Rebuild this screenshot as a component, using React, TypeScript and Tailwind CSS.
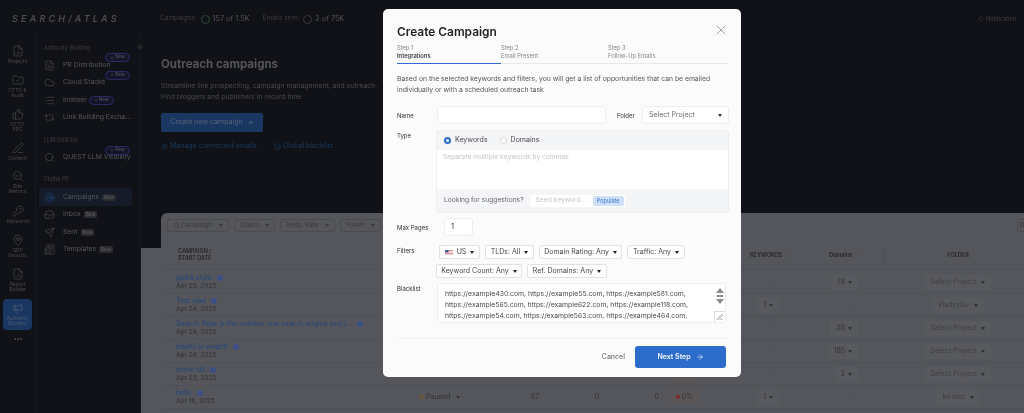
import { ArrowRight, Ban, Bell, ChevronLeft, ChevronsUpDown, Cloud, Ellipsis, FileChartColumn, FileText, Inbox, KeyRound, List, MapPin, Megaphone, PenLine, Plus, Repeat2, Search, SearchCheck, Send, Settings, ThumbsUp, FolderCheck, Newspaper, Target, X } from "lucide-react";

const font = { fontFamily: '"Inter", "Liberation Sans", sans-serif' };

const railItems = [
    { icon: FileChartColumn, label: "Projects", h: "h-[29px]" },
    { icon: FolderCheck, label: "OTTO & Audit", h: "h-[34px]" },
    { icon: ThumbsUp, label: "OTTO PPC", h: "h-[34px]" },
    { icon: PenLine, label: "Content", h: "h-[28px]" },
    { icon: SearchCheck, label: "Site Metrics", h: "h-[35px]" },
    { icon: KeyRound, label: "Keywords", h: "h-[29px]" },
    { icon: MapPin, label: "GBP Galactic", h: "h-[34px]" },
    { icon: FileChartColumn, label: "Report Builder", h: "h-[31px]" },
];

function NewBadge({ inline }: { inline?: boolean }) {
    return (
        <span
            className={`flex h-[9px] w-[25px] items-center justify-center gap-[1px] rounded-full border border-[#2c2a63] bg-[#15152a] text-[4.5px] text-[#5a5a68] ${
                inline ? "ml-[2px]" : "absolute right-[2px] top-[-3px]"
            }`}
        >
            <Plus size={4} />
            New
        </span>
    );
}

function BetaBadge() {
    return <span className="ml-[3px] rounded-[2px] bg-[#2b2c31] px-[2px] text-[4.5px] leading-[7px] text-[#64646a]">Beta</span>;
}

function NavRow({ icon: Icon, label, badge, active }: { icon: typeof FileText; label: string; badge?: "new" | "inline" | "beta"; active?: boolean }) {
    return (
        <div className={`relative flex h-[17.5px] items-center pl-[5px] ${active ? "rounded-[2px] bg-[#151b28]" : ""}`}>
            <Icon size={11} strokeWidth={1.2} className={active ? "text-[#1f4a86]" : "text-[#55565a]"} />
            <span className="ml-[8px] whitespace-nowrap text-[6.8px] text-[#55565a]">{label}</span>
            {badge === "new" && <NewBadge />}
            {badge === "inline" && <NewBadge inline />}
            {badge === "beta" && <BetaBadge />}
        </div>
    );
}

function GroupTitle({ children, className = "" }: { children: string; className?: string }) {
    return <div className={`pl-[5px] text-[5.5px] text-[#38393e] ${className}`}>{children}</div>;
}

function FilterButton({ label, search, width }: { label: string; search?: boolean; width: string }) {
    return (
        <div className={`flex h-[13px] shrink-0 items-center justify-between rounded-[3px] border border-[#4a4b4f] px-[5px] text-[6.5px] text-[#3a3b3f] ${width}`}>
            <span className="flex items-center gap-[1px]">
                {search && <Search size={7} />}
                {label}
            </span>
            <Caret />
        </div>
    );
}

function Caret({ className = "" }: { className?: string }) {
    return <span className={`inline-block h-0 w-0 border-x-[2.5px] border-t-[3px] border-x-transparent border-t-current ${className}`} />;
}

const rows = [
    { name: "ghibli style", date: "Apr 25, 2025", keywords: "-", domains: "74", folder: "Select Project" },
    { name: "Test vlad", date: "Apr 24, 2025", keywords: "1", domains: "-", folder: "Vladyslav" },
    { name: "Search Atlas is the number one search engine tool i...", date: "Apr 24, 2025", keywords: "-", domains: "26", folder: "Select Project" },
    { name: "health is wealth", date: "Apr 24, 2025", keywords: "-", domains: "185", folder: "Select Project" },
    { name: "show nill", date: "Apr 23, 2025", keywords: "-", domains: "2", folder: "Select Project" },
    { name: "hello", date: "Apr 18, 2025", keywords: "1", domains: "-", folder: "ke test" },
];

function ValueChip({ value, dashGap }: { value: string; dashGap: string }) {
    if (value === "-") return <span className={`text-[#45464a] ${dashGap}`}>-</span>;
    return (
        <span className="flex h-[15px] items-center gap-[3px] rounded-[2px] bg-[#58595e] px-[6px] text-[#333438]">
            {value}
            <Caret />
        </span>
    );
}

function TableRow({ row, last }: { row: (typeof rows)[number]; last: boolean }) {
    return (
        <div className="flex h-[23px] items-center border-b border-[#505156] text-[7px]">
            <div className="w-[240px] shrink-0 pl-[15px] leading-[8.5px]">
                <div className="flex items-center gap-[5px] whitespace-nowrap text-[#23467d]">
                    {row.name}
                    <span className="h-[6px] w-[6px] rounded-full bg-[#3d4f85]" />
                </div>
                <div className="text-[6.5px] text-[#313236]">{row.date}</div>
            </div>
            <div className="flex w-[104px] shrink-0 items-center pl-[19px] text-[7px] text-[#333438]">
                {last && (
                    <span className="flex items-center gap-[3px]">
                        <span className="h-[4px] w-[3px] border-x border-[#7a5d20]" />
                        Paused
                        <Caret className="ml-[2px]" />
                    </span>
                )}
            </div>
            <div className="flex w-[60px] shrink-0 justify-center text-[#333438]">{last ? "87" : ""}</div>
            <div className="flex w-[64px] shrink-0 justify-center text-[#333438]">{last ? "0" : ""}</div>
            <div className="flex w-[41px] shrink-0 justify-end pr-[11px] text-[#333438]">{last ? "0" : ""}</div>
            <div className="flex h-[15px] w-[29px] shrink-0 items-center justify-center gap-[2px] rounded-[2px] bg-[#5a5657] text-[#333438]">
                {last && (
                    <>
                        <span className="h-[4px] w-[4px] rounded-full bg-[#7c2b2b]" />
                        0%
                    </>
                )}
            </div>
            <div className="flex w-[80px] shrink-0 justify-end">
                <ValueChip value={row.keywords} dashGap="mr-[2px]" />
            </div>
            <div className="flex w-[79px] shrink-0 justify-end">
                <ValueChip value={row.domains} dashGap="mr-[6px]" />
            </div>
            <div className="ml-[33px] flex w-[134px] shrink-0 justify-center text-[#3f4044]">
                <span className="flex h-[15px] items-center gap-[5px] rounded-[2px] bg-[#58595e] px-[6px]">
                    {row.folder}
                    <Caret className="text-[#303135]" />
                </span>
            </div>
        </div>
    );
}

function Pill({ children, width }: { children: React.ReactNode; width: string }) {
    return (
        <span className={`flex h-[14px] items-center justify-center gap-[4px] rounded-[2px] border border-[#e2e2e2] bg-white text-[7px] text-[#45464a] ${width}`}>
            {children}
            <Caret className="text-[#222]" />
        </span>
    );
}

function Label({ children, className = "" }: { children: string; className?: string }) {
    return <div className={`w-[40px] shrink-0 text-[6px] text-[#2f3033] ${className}`}>{children}</div>;
}

function UsFlag() {
    return (
        <svg width="8" height="5" viewBox="0 0 16 10" className="shrink-0">
            <rect width="16" height="10" fill="#d98a92" />
            <rect y="2" width="16" height="1.5" fill="#fff" />
            <rect y="5" width="16" height="1.5" fill="#fff" />
            <rect y="8" width="16" height="1" fill="#fff" />
            <rect width="7" height="5" fill="#4a5a94" />
        </svg>
    );
}

function Modal() {
    return (
        <div className="absolute left-[383px] top-[9px] h-[368px] w-[358px] rounded-[5px] bg-[#fbfbfb] px-[14px] blur-[0.2px]">
            <X size={16} strokeWidth={1.2} className="absolute right-[12px] top-[13px] text-[#8b8c90]" />
            <div className="pt-[13px] text-[11.9px] font-semibold leading-[20px] text-[#1f2023]">Create Campaign</div>
            <div className="mt-[2px] flex h-[20px] border-b border-[#e8e8e8] text-[5.8px] leading-[7.5px] text-[#85868a]">
                <div className="h-[20px] w-[104px] border-b-[1.5px] border-[#2d6ad1]">
                    Step 1
                    <div className="font-semibold text-[#3c3d41]">Integrations</div>
                </div>
                <div className="w-[107px]">
                    Step 2<div>Email Present</div>
                </div>
                <div>
                    Step 3<div>Follow-Up Emails</div>
                </div>
            </div>
            <p className="mt-[10px] w-[330px] text-[6.8px] leading-[10.5px] text-[#55565a]">
                Based on the selected keywords and filters, you will get a list of opportunities that can be emailed individually or with a scheduled outreach task
            </p>

            <div className="mt-[11px] flex h-[18px] items-center">
                <Label>Name</Label>
                <div className="h-[18px] w-[169px] shrink-0 rounded-[3px] border border-[#eeeeee] bg-white" />
                <span className="ml-[11px] w-[25px] shrink-0 text-[6px] text-[#2f3033]">Folder</span>
                <div className="flex h-[18px] w-[87px] shrink-0 items-center justify-between rounded-[3px] border border-[#eeeeee] bg-white px-[6px] text-[7px] text-[#6a6b6f]">
                    Select Project
                    <Caret className="text-[#333]" />
                </div>
            </div>

            <div className="mt-[6px] flex">
                <Label className="pt-[1px]">Type</Label>
                <div className="ml-[-1px] h-[83px] w-[293px] shrink-0 overflow-hidden rounded-[3px] border border-[#eeeeee] bg-[#f4f5f6]">
                    <div className="flex h-[19px] items-center pl-[7px] text-[7px] text-[#4a4b4f]">
                        <span className="h-[7px] w-[7px] rounded-full border-[2px] border-[#2d6ad1] bg-white" />
                        <span className="ml-[4px]">Keywords</span>
                        <span className="ml-[12px] h-[7px] w-[7px] rounded-full border border-[#d5d5d5] bg-white" />
                        <span className="ml-[4px]">Domains</span>
                    </div>
                    <div className="h-[39px] bg-white pl-[6px] pt-[2px] text-[6.7px] text-[#c4c5c8]">Separate multiple keywords by commas</div>
                    <div className="flex h-[23px] items-center pl-[7px] text-[6.7px] text-[#6a6b6f]">
                        Looking for suggestions?
                        <div className="ml-[6px] flex h-[12px] w-[95px] items-center justify-between rounded-[2px] bg-white pl-[6px] pr-[1px] text-[#c4c5c8]">
                            Seed keyword...
                            <span className="rounded-[2px] bg-[#cfe0f8] px-[4px] text-[5.5px] leading-[10px] text-[#3c78d0]">Populate</span>
                        </div>
                    </div>
                </div>
            </div>

            <div className="mt-[5px] flex h-[18px] items-center">
                <Label>Max Pages</Label>
                <div className="ml-[7px] flex h-[18px] w-[29px] items-center rounded-[3px] border border-[#eeeeee] bg-white pl-[6px] text-[7.5px] text-[#333]">1</div>
            </div>

            <div className="mt-[9px] flex">
                <Label className="pt-[1px]">Filters</Label>
                <div className="flex w-[250px] flex-wrap gap-x-[5px] gap-y-[5px]">
                    <Pill width="w-[41px] ml-[2px]">
                        <UsFlag />
                        US
                    </Pill>
                    <Pill width="w-[49px]">TLDs: All</Pill>
                    <Pill width="w-[83px]">Domain Rating: Any</Pill>
                    <Pill width="w-[58px]">Traffic: Any</Pill>
                    <Pill width="w-[86px] ml-[-1px]">Keyword Count: Any</Pill>
                    <Pill width="w-[80px]">Ref. Domains: Any</Pill>
                </div>
            </div>

            <div className="mt-[5px] flex">
                <Label className="pt-[1px]">Blacklist</Label>
                <div className="relative h-[40px] w-[289px] shrink-0 overflow-hidden rounded-[3px] border border-[#eeeeee] bg-white pl-[7px] pt-[4px] text-[6.85px] leading-[11px] text-[#4a4b4f]">
                    <div className="whitespace-nowrap">https://example430.com, https://example55.com, https://example581.com,</div>
                    <div className="whitespace-nowrap">https://example565.com, https://example622.com, https://example118.com,</div>
                    <div className="whitespace-nowrap">https://example54.com, https://example563.com, https://example464.com,</div>
                    <div className="whitespace-nowrap">https://example244.com, https://example311.com, https://example48.com,</div>
                    <div className="absolute right-0 top-0 flex h-full w-[11px] flex-col items-center bg-white pt-[4px] text-[#8a8b8e]">
                        <span className="h-0 w-0 border-x-[4px] border-b-[5px] border-x-transparent border-b-current" />
                        <span className="mt-[2px] h-[2px] w-[6px] bg-current" />
                        <span className="mt-[2px] h-0 w-0 border-x-[4px] border-t-[5px] border-x-transparent border-t-current" />
                    </div>
                    <span className="absolute bottom-0 right-0 flex h-[11px] w-[11px] items-center justify-center border-l border-t border-[#dddddd] bg-white text-[#666]">
                        <PenLine size={6} />
                    </span>
                </div>
            </div>

            <div className="mt-[15px] flex h-[39px] items-start justify-end border-t border-[#f0f0f0] pr-[1px] pt-[7px]">
                <span className="mr-[10px] flex h-[22px] items-center text-[7px] font-medium text-[#77787c]">Cancel</span>
                <span className="flex h-[22px] w-[91px] items-center justify-center gap-[5px] rounded-[3px] bg-[#2d6ccb] text-[7px] font-semibold text-[#f2f6fc]">
                    Next Step
                    <ArrowRight size={8} />
                </span>
            </div>
        </div>
    );
}

export default function App() {
    return (
        <div style={font} className="relative h-[413px] w-[1024px] overflow-hidden bg-[#111217]">
            <div className="flex h-full flex-col blur-[0.6px]">
                <div className="flex h-[33px] shrink-0 items-center pt-[5px]">
                    <div className="w-[141px] whitespace-nowrap pl-[12px] text-[9px] font-semibold italic tracking-[3.2px] text-[#4b4c50]">SEARCH/ATLAS</div>
                    <div className="flex items-center pl-[19px] text-[6.5px]">
                        <span className="text-[#3a3b3f]">Campaigns:</span>
                        <span className="ml-[4px] h-[9px] w-[9px] rounded-full border border-[#2d4a34]" />
                        <span className="ml-[3px] text-[7.3px] text-[#515256]">157 of 1.5K</span>
                        <span className="ml-[13px] text-[#3a3b3f]">Emails sent:</span>
                        <span className="ml-[4px] h-[9px] w-[9px] rounded-full border border-[#35363a]" />
                        <span className="ml-[3px] text-[7.3px] text-[#515256]">2 of 75K</span>
                    </div>
                    <div className="ml-auto flex items-center gap-[2px] pr-[8px] text-[5.5px] text-[#3c3d42]">
                        <Bell size={6} />
                        Notification
                    </div>
                </div>

                <div className="flex min-h-0 flex-1">
                    <aside className="flex w-[36px] shrink-0 flex-col items-center border-r border-[#191a20] pt-[12px]">
                        {railItems.map((item) => (
                            <div key={item.label} className={`flex w-full shrink-0 flex-col items-center text-center text-[5px] leading-[5.2px] text-[#45464b] ${item.h}`}>
                                <item.icon size={12} strokeWidth={1.1} className="mb-[1.5px] text-[#55565a]" />
                                <span className="w-[22px]">{item.label}</span>
                            </div>
                        ))}
                        <div className="flex h-[31px] w-[29px] shrink-0 flex-col items-center justify-center rounded-[4px] bg-[#1a3761] text-center text-[5px] leading-[5.2px] text-[#46566f]">
                            <Megaphone size={11} strokeWidth={1.2} className="mb-[2px] text-[#56657c]" />
                            <span className="w-[24px]">Authority Building</span>
                        </div>
                        <Ellipsis size={10} className="mt-[4px] shrink-0 text-[#55565a]" />
                    </aside>

                    <nav className="relative w-[105px] shrink-0 border-r border-[#17181d] pl-[3px] pr-[8px] pt-[11px]">
                        <ChevronLeft size={6} className="absolute right-[-3px] top-[11px] rounded-full bg-[#1a1b20] text-[#55565a]" />
                        <GroupTitle className="mb-[4px]">Authority Building</GroupTitle>
                        <NavRow icon={FileText} label="PR Distribution" badge="new" />
                        <NavRow icon={Cloud} label="Cloud Stacks" badge="new" />
                        <NavRow icon={List} label="Indexer" badge="inline" />
                        <NavRow icon={Repeat2} label="Link Building Excha..." />
                        <GroupTitle className="mb-[4px] mt-[10px]">LLM Visibility</GroupTitle>
                        <NavRow icon={Search} label="QUEST LLM Visibility" badge="new" />
                        <GroupTitle className="mb-[5px] mt-[9px]">Digital PR</GroupTitle>
                        <NavRow icon={Target} label="Campaigns" badge="beta" active />
                        <NavRow icon={Inbox} label="Inbox" badge="beta" />
                        <NavRow icon={Send} label="Sent" badge="beta" />
                        <NavRow icon={Newspaper} label="Templates" badge="beta" />
                    </nav>

                    <main className="min-w-0 flex-1">
                        <div className="h-[180px] pl-[20px] pt-[23px]">
                            <h1 className="text-[11.5px] font-bold leading-[16px] text-[#55565a]">Outreach campaigns</h1>
                            <p className="mt-[9px] text-[6.85px] leading-[10.5px] text-[#47484c]">
                                Streamline link prospecting, campaign management, and outreach.
                                <br />
                                Find bloggers and publishers in record time.
                            </p>
                            <div className="mt-[11px] flex h-[19px] w-[102px] items-center justify-center gap-[4px] rounded-[2px] bg-[#1a3761] text-[7px] text-[#566578]">
                                Create new campaign
                                <ArrowRight size={7} />
                            </div>
                            <div className="mt-[9px] flex items-center text-[7px] text-[#173a5e]">
                                <Settings size={7} />
                                <span className="ml-[2px]">Manage connected emails</span>
                                <Ban size={7} className="ml-[17px]" />
                                <span className="ml-[2px]">Global blacklist</span>
                            </div>
                        </div>

                        <div className="relative flex h-[200px] bg-[#111217] pt-[35px]">
                            <div className="absolute inset-x-0 bottom-0 top-[35px] bg-[#55565b]" />
                            <div className="absolute bottom-0 left-[20px] right-0 top-0 overflow-hidden rounded-tl-[6px] bg-[#55565b] px-[6px] pt-[6px]">
                                <div className="flex gap-[5px]">
                                    <FilterButton label="Campaign" search width="w-[62px]" />
                                    <FilterButton label="Status" width="w-[41px]" />
                                    <FilterButton label="Resp. Rate" width="w-[55px]" />
                                    <FilterButton label="Folder" width="w-[41px]" />
                                    <span className="ml-[631px] flex h-[13px] w-[12px] shrink-0 items-center rounded-l-[3px] border border-[#4a4b4f] pl-[2px] text-[6.5px] text-[#303135]">D</span>
                                </div>
                                <div className="-mx-[6px] mt-[13px] flex h-[25px] items-center border-b border-[#505156] pb-[4px] text-[5.5px] font-semibold leading-[7px] text-[#25262a]">
                                    <div className="w-[240px] shrink-0 pl-[17px]">
                                        CAMPAIGN /
                                        <br />
                                        START DATE
                                    </div>
                                    <div className="w-[349px] shrink-0" />
                                    <div className="flex w-[42px] shrink-0 items-center gap-[1px]">
                                        KEYWORDS
                                        <ChevronsUpDown size={6} className="text-[#47484c]" />
                                    </div>
                                    <div className="ml-[37px] flex w-[33px] shrink-0 items-center gap-[1px]">
                                        Domains
                                        <ChevronsUpDown size={6} className="text-[#47484c]" />
                                    </div>
                                    <div className="ml-[21px] h-[10px] w-px shrink-0 bg-[#4e4f54]" />
                                    <div className="ml-[7px] w-[134px] shrink-0 text-center">FOLDER</div>
                                </div>
                                <div className="-mx-[6px] pt-[1px]">
                                    {rows.map((row, i) => (
                                        <TableRow key={row.name} row={row} last={i === rows.length - 1} />
                                    ))}
                                </div>
                            </div>
                        </div>
                    </main>
                </div>
            </div>
            <Modal />
        </div>
    );
}
